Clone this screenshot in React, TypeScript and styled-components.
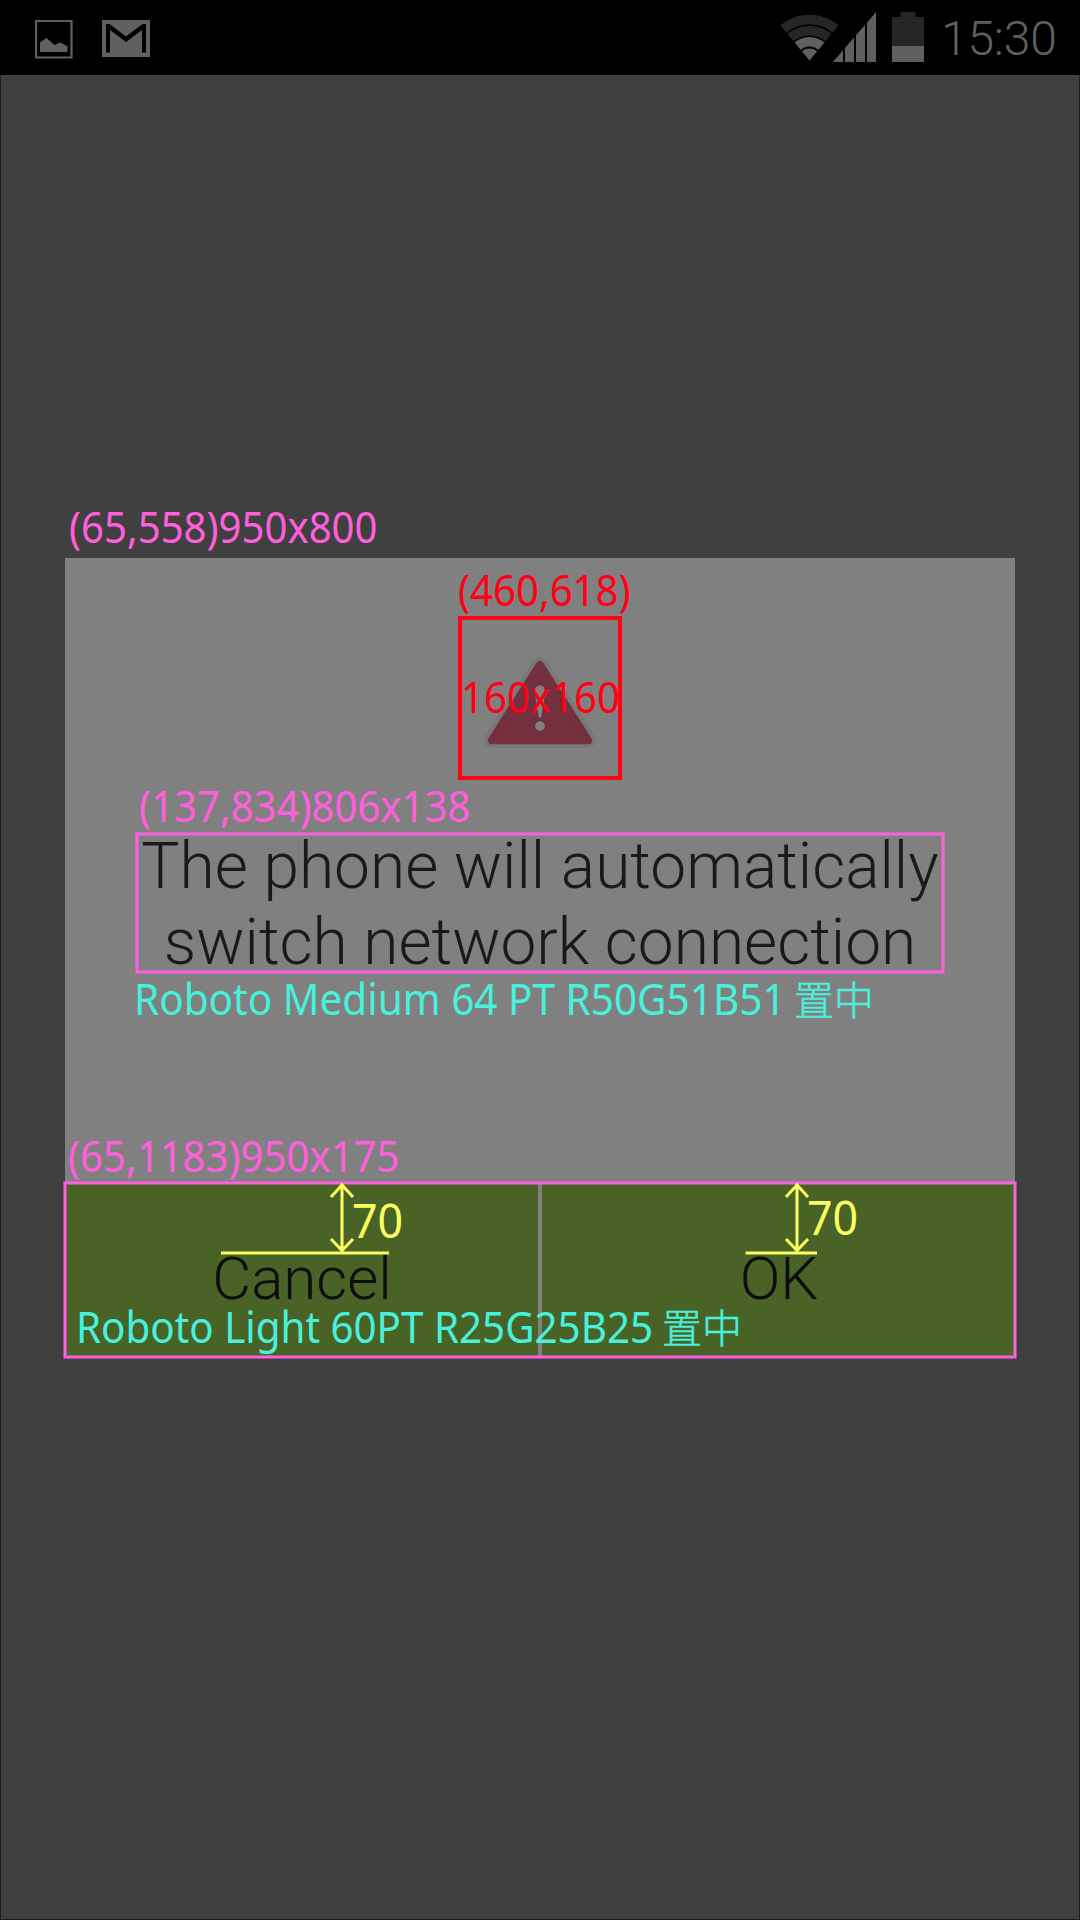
import React from "react";
import styled, { createGlobalStyle } from "styled-components";

const PINK = "#ff5fdc";
const RED = "#ff0014";
const CYAN = "#48f1dc";
const YELLOW = "#fbff5e";

const GlobalStyle = createGlobalStyle`
  * { box-sizing: border-box; }
  body { margin: 0; background: #404040; }
`;

const Screen = styled.div`
  position: relative;
  width: 1080px;
  height: 1920px;
  overflow: hidden;
  display: flex;
  flex-direction: column;
  background: #404040;
  font-family: Roboto, sans-serif;
`;

const StatusBar = styled.header`
  height: 75px;
  flex: none;
  display: flex;
  justify-content: space-between;
  background: #000;
`;

const StatusGroup = styled.div`
  display: flex;
  align-items: flex-start;
`;

const Clock = styled.span`
  width: 139px;
  margin-left: 17px;
  padding-top: 11px;
  font-size: 48px;
  line-height: 56px;
  font-weight: 300;
  letter-spacing: -0.2px;
  color: #606060;
`;

const Main = styled.main`
  flex: 1;
  padding: 483px 65px 0;
  border: solid #1c1c1c;
  border-width: 0 1px 1px;
  margin: 0;
`;

const Dialog = styled.section`
  width: 950px;
  height: 800px;
  margin-left: -1px;
  display: flex;
  flex-direction: column;
  background: #808080;
`;

const DialogBody = styled.div`
  flex: 1;
  display: flex;
  flex-direction: column;
  align-items: center;
  padding-top: 60px;
`;

const Message = styled.p`
  margin: 51px 0 0;
  font-size: 64px;
  line-height: 76px;
  font-weight: 300;
  text-align: center;
  white-space: nowrap;
  color: #1a1a1a;
`;

const Actions = styled.div`
  height: 175px;
  display: flex;
  gap: 4px;
`;

const Action = styled.button`
  flex: 1;
  padding: 61px 0 0 1px;
  border: 0;
  display: flex;
  justify-content: center;
  align-items: flex-start;
  background: #496226;
  color: #0d0d0d;
  font-family: Roboto, sans-serif;
  font-size: 60px;
  line-height: 70px;
  font-weight: 300;
`;

/* Measurement notes float over the dialog on a free canvas. */
const Notes = styled.div`
  position: absolute;
  inset: 0;
  pointer-events: none;
`;

const Note = styled.span<{ $x: number; $base: number; $color: string; $size?: number; $stretch?: number }>`
  position: absolute;
  left: ${(p) => p.$x}px;
  top: ${(p) => p.$base - 45}px;
  line-height: 60px;
  font-family: "Noto Sans", sans-serif;
  font-size: ${(p) => p.$size ?? 43}px;
  white-space: nowrap;
  color: ${(p) => p.$color};
  transform: scaleX(${(p) => p.$stretch ?? 0.933});
  transform-origin: 0 0;
`;

const CjkNote = styled(Note)`
  margin-top: -1px;
  font-family: "Noto Sans CJK TC", sans-serif;
  font-weight: 300;
  -webkit-text-stroke: 0.5px ${(p) => p.$color};
`;

const Frame = styled.div<{ $x: number; $y: number; $w: number; $h: number }>`
  position: absolute;
  left: ${(p) => p.$x - 1}px;
  top: ${(p) => p.$y - 1}px;
  width: ${(p) => p.$w + 2}px;
  height: ${(p) => p.$h + 2}px;
  border: 2px solid ${PINK};
  box-shadow: 0 0 0 1px ${PINK}80, inset 0 0 0 1px ${PINK}80;
`;

const IconFrame = styled.div`
  position: absolute;
  left: 458px;
  top: 616px;
  width: 164px;
  height: 164px;
  border: 4px solid ${RED};
`;

const Gauge = styled.svg<{ $x: number }>`
  position: absolute;
  left: ${(p) => p.$x}px;
  top: 1180px;
`;

const PictureGlyph = styled.svg`
  margin-left: 35px;
`;

const MailGlyph = styled.svg`
  margin-left: 29px;
`;

const SignalGlyph = styled.svg`
  margin-left: -5px;
`;

const BatteryGlyph = styled.svg`
  margin-left: 16px;
`;

const PictureIcon = () => (
  <PictureGlyph width="38" height="75">
    <path d="M1 21h35.500v36.500H1z" fill="none" stroke="#606060" strokeWidth="2.200" />
    <path d="M5 42.500l6.500-4.500 8 7 6-2.500 7 4V52H5z" fill="#606060" />
  </PictureGlyph>
);

const MailIcon = () => (
  <MailGlyph width="48" height="75">
    <path d="M0 20h48v37H0z" fill="#606060" />
    <path d="M4 52.500V24H7.500L24 36.500 40.500 24H44V52.500H40V30L24 42 8 30V52.500Z" fill="#000" />
  </MailGlyph>
);

const WifiIcon = () => (
  <svg width="58" height="75" viewBox="780 0 58 75">
    <defs>
      <clipPath id="wedge"><path d="M809.500 60.500L775 18.800V0H844V18.800Z" /></clipPath>
    </defs>
    <g clipPath="url(#wedge)">
      <circle cx="809.500" cy="60" r="45.300" fill="#262626" />
      <circle cx="809.500" cy="60" r="34.800" fill="none" stroke="#000" strokeWidth="1.800" />
      <circle cx="809.500" cy="60" r="24.500" fill="#000" />
      <circle cx="809.500" cy="60" r="23" fill="#606060" />
      <circle cx="809.500" cy="60" r="12.500" fill="none" stroke="#000" strokeWidth="2" />
    </g>
  </svg>
);

const SignalIcon = () => (
  <SignalGlyph width="43" height="75" viewBox="833 0 43 75">
    <path d="M833 62L843 50.300V62ZM845 48V62H854V37.500ZM856 35V62H865V25ZM867 22.700V62H876V12Z" fill="#606060" />
  </SignalGlyph>
);

const BatteryIcon = () => (
  <BatteryGlyph width="32" height="75">
    <path d="M8.500 12h15v5H32v29H0V17h8.500z" fill="#262626" />
    <path d="M0 46h32v16H0z" fill="#606060" />
  </BatteryGlyph>
);

const WarningIcon = () => (
  <svg width="160" height="160" viewBox="460 618 160 160">
    <path
      d="M539.800 665L492 740.300H588Z"
      fill="#787878" stroke="#787878" strokeWidth="16" strokeLinejoin="round"
    />
    <path
      d="M539.800 665L491.800 740.300H588.200Z"
      fill="#74303e" stroke="#74303e" strokeWidth="8" strokeLinejoin="round"
    />
    <path
      d="M534.600 691C534.600 683 545.200 683 545.200 691C545.200 700 542.800 708 541.700 718H538.300C537.200 708 534.600 700 534.600 691Z"
      fill="#808080" stroke="#662b37" strokeWidth="0.800"
    />
    <circle cx="540" cy="726" r="5.300" fill="#808080" stroke="#662b37" strokeWidth="0.800" />
  </svg>
);

const GapArrow = ({ x, tip, lineStart, lineEnd }: { x: number; tip: number; lineStart: number; lineEnd: number }) => (
  <Gauge $x={x} width="180" height="80" fill="none" stroke={YELLOW}>
    <path
      strokeWidth="3"
      d={`M${tip} 4V70M${tip - 11} 17L${tip} 5L${tip + 11} 17M${tip - 11} 59L${tip} 70.500L${tip + 11} 59M${lineStart} 73H${lineEnd}`}
    />
  </Gauge>
);

export default function App() {
  return (
    <Screen>
      <GlobalStyle />
      <StatusBar>
        <StatusGroup>
          <PictureIcon />
          <MailIcon />
        </StatusGroup>
        <StatusGroup>
          <WifiIcon />
          <SignalIcon />
          <BatteryIcon />
          <Clock>15:30</Clock>
        </StatusGroup>
      </StatusBar>
      <Main>
        <Dialog>
          <DialogBody>
            <WarningIcon />
            <Message>
              The phone will automatically
              <br />
              switch network connection
            </Message>
          </DialogBody>
          <Actions>
            <Action>Cancel</Action>
            <Action>OK</Action>
          </Actions>
        </Dialog>
      </Main>
      <Notes>
        <Note $x={69} $base={542} $color={PINK}>(65,558)950x800</Note>
        <Note $x={458} $base={605} $color={RED}>(460,618)</Note>
        <IconFrame />
        <Note $x={461} $base={712} $color={RED}>160x160</Note>
        <Note $x={139} $base={821} $color={PINK}>(137,834)806x138</Note>
        <Frame $x={137} $y={834} $w={806} $h={138} />
        <Note $x={134} $base={1014} $color={CYAN} $stretch={0.942}>Roboto Medium 64 PT R50G51B51</Note>
        <CjkNote $x={794} $base={1014} $color={CYAN} $size={40} $stretch={1}>置中</CjkNote>
        <Note $x={68} $base={1171} $color={PINK}>(65,1183)950x175</Note>
        <Frame $x={65} $y={1183} $w={950} $h={174} />
        <GapArrow x={220} tip={122} lineStart={1} lineEnd={169} />
        <GapArrow x={740} tip={57} lineStart={5.5} lineEnd={77} />
        <Note $x={352} $base={1235} $color={YELLOW} $size={48}>70</Note>
        <Note $x={807} $base={1232} $color={YELLOW} $size={48}>70</Note>
        <Note $x={76} $base={1342} $color={CYAN} $stretch={0.938}>Roboto Light 60PT R25G25B25</Note>
        <CjkNote $x={662} $base={1342} $color={CYAN} $size={40} $stretch={1}>置中</CjkNote>
      </Notes>
    </Screen>
  );
}
